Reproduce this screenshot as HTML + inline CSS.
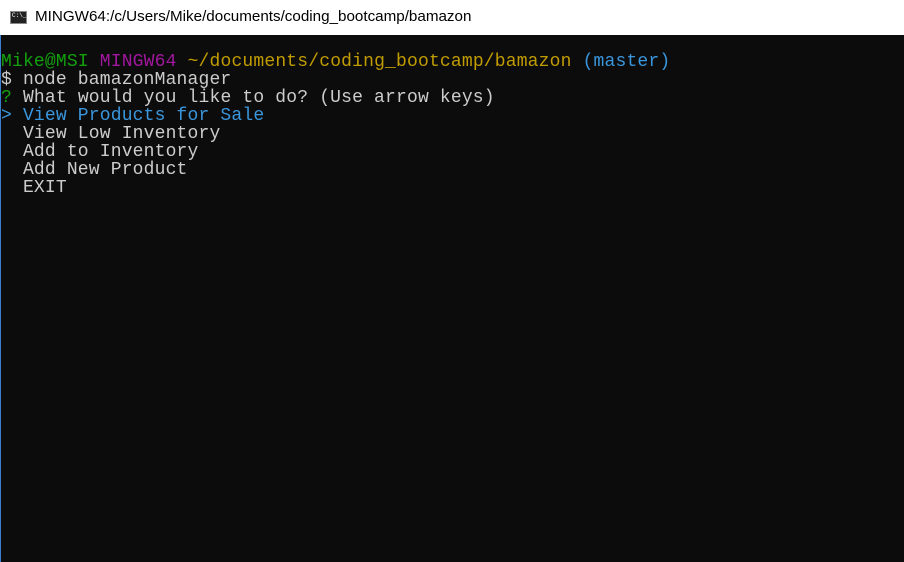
<!DOCTYPE html>
<html><head><style>
body{margin:0;width:904px;height:562px;overflow:hidden;background:#0c0c0c;position:relative}
#t{position:absolute;left:0;top:0;width:904px;height:35px;background:#fff;font:15.2px "Liberation Sans",sans-serif;color:#000}
#t span{position:absolute;left:35px;top:8px}
#ic{position:absolute;left:10px;top:11px;width:17px;height:13px;background:#222;border:1px solid #888;box-sizing:border-box}
#ic:after{content:"C:\\_";position:absolute;left:1px;top:0;font:6px "Liberation Mono",monospace;color:#fff}
#b{position:absolute;left:0;top:35px;width:1px;height:527px;background:#3a7fd0}
pre{position:absolute;left:1px;top:53px;margin:0;font:18px/18px "Liberation Mono",monospace;letter-spacing:0.17px;color:#cccccc}
.g{color:#13a10e}.p{color:#a0179e}.y{color:#c19c00}.bl{color:#3a96dd}
</style></head><body>
<div id="t"><div id="ic"></div><span>MINGW64:/c/Users/Mike/documents/coding_bootcamp/bamazon</span></div>
<div id="b"></div>
<pre><span class="g">Mike@MSI</span> <span class="p">MINGW64</span> <span class="y">~/documents/coding_bootcamp/bamazon</span> <span class="bl">(master)</span>
$ node bamazonManager
<span class="g">?</span> What would you like to do? (Use arrow keys)
<span class="bl">&gt; View Products for Sale</span>
  View Low Inventory
  Add to Inventory
  Add New Product
  EXIT</pre>
</body></html>
